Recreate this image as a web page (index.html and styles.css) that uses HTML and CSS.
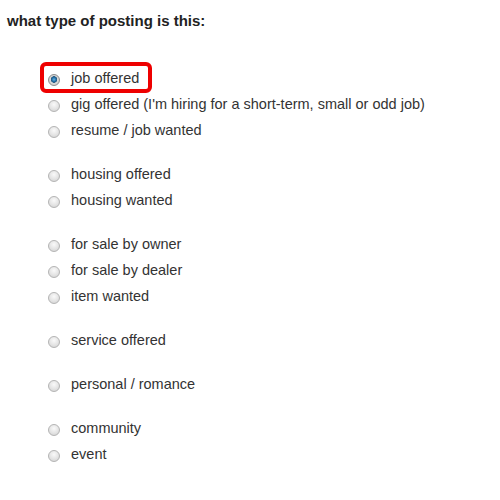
FILE: index.html
```html
<!DOCTYPE html>
<html lang="en">
  <head>
    <meta charset="UTF-8" />
    <title>what type of posting is this</title>
    <link rel="stylesheet" href="styles.css">
  </head>
  <body>
    <h1 class="title">what type of posting is this:</h1>

    <div class="choices">
      <div class="group">
        <label class="choice picked"><input type="radio" name="type" checked /><span>job offered</span></label>
        <label class="choice"><input type="radio" name="type" /><span>gig offered (I'm hiring for a short-term, small or odd job)</span></label>
        <label class="choice"><input type="radio" name="type" /><span>resume / job wanted</span></label>
      </div>
      <div class="group">
        <label class="choice"><input type="radio" name="type" /><span>housing offered</span></label>
        <label class="choice"><input type="radio" name="type" /><span>housing wanted</span></label>
      </div>
      <div class="group">
        <label class="choice"><input type="radio" name="type" /><span>for sale by owner</span></label>
        <label class="choice"><input type="radio" name="type" /><span>for sale by dealer</span></label>
        <label class="choice"><input type="radio" name="type" /><span>item wanted</span></label>
      </div>
      <div class="group">
        <label class="choice"><input type="radio" name="type" /><span>service offered</span></label>
      </div>
      <div class="group">
        <label class="choice"><input type="radio" name="type" /><span>personal / romance</span></label>
      </div>
      <div class="group">
        <label class="choice"><input type="radio" name="type" /><span>community</span></label>
        <label class="choice"><input type="radio" name="type" /><span>event</span></label>
      </div>
    </div>
  </body>
</html>
```

FILE: styles.css
```css
body {
  background-color: white;
  color: #333;
  font-family: "Liberation Sans", Arial, sans-serif;
  font-size: 14.5px;
  margin: 0;
  padding: 0;
}
.title {
  font-size: 15px;
  font-weight: bold;
  color: #222;
  margin: 0;
  padding: 12px 0 0 7px;
  line-height: 18px;
}
.choices {
  padding: 34px 0 0 40px;
}
.group {
  display: flex;
  flex-direction: column;
  align-items: flex-start;
  margin-bottom: 18px;
}
.choice {
  display: flex;
  align-items: center;
  height: 26px;
  padding: 0 13px 0 8px;
}
/* red marker drawn over the chosen row */
.choice.picked {
  position: relative;
}
.choice.picked::after {
  content: "";
  position: absolute;
  top: -2px;
  bottom: -3px;
  left: 0;
  right: 0;
  border: 4px solid #ee0000;
  border-radius: 6px;
}
.choice input {
  appearance: none;
  -webkit-appearance: none;
  width: 12px;
  height: 12px;
  margin: 5px 11px 0 0;
  border: 1px solid #b4b4b4;
  border-radius: 50%;
  box-sizing: border-box;
  background: radial-gradient(circle at 50% 35%, #fafafa 0, #e4e4e4 55%, #cfcfcf 100%);
}
.choice input:checked {
  border-color: #8c8c8c;
  background: radial-gradient(circle at 50% 45%, #6fb3e0 0, #1f6fa8 2px, #25557a 3px, #d8d8d8 3.5px, #c8c8c8 100%);
}
.choice span {
  line-height: 16px;
  margin-top: 2px;
}
```
